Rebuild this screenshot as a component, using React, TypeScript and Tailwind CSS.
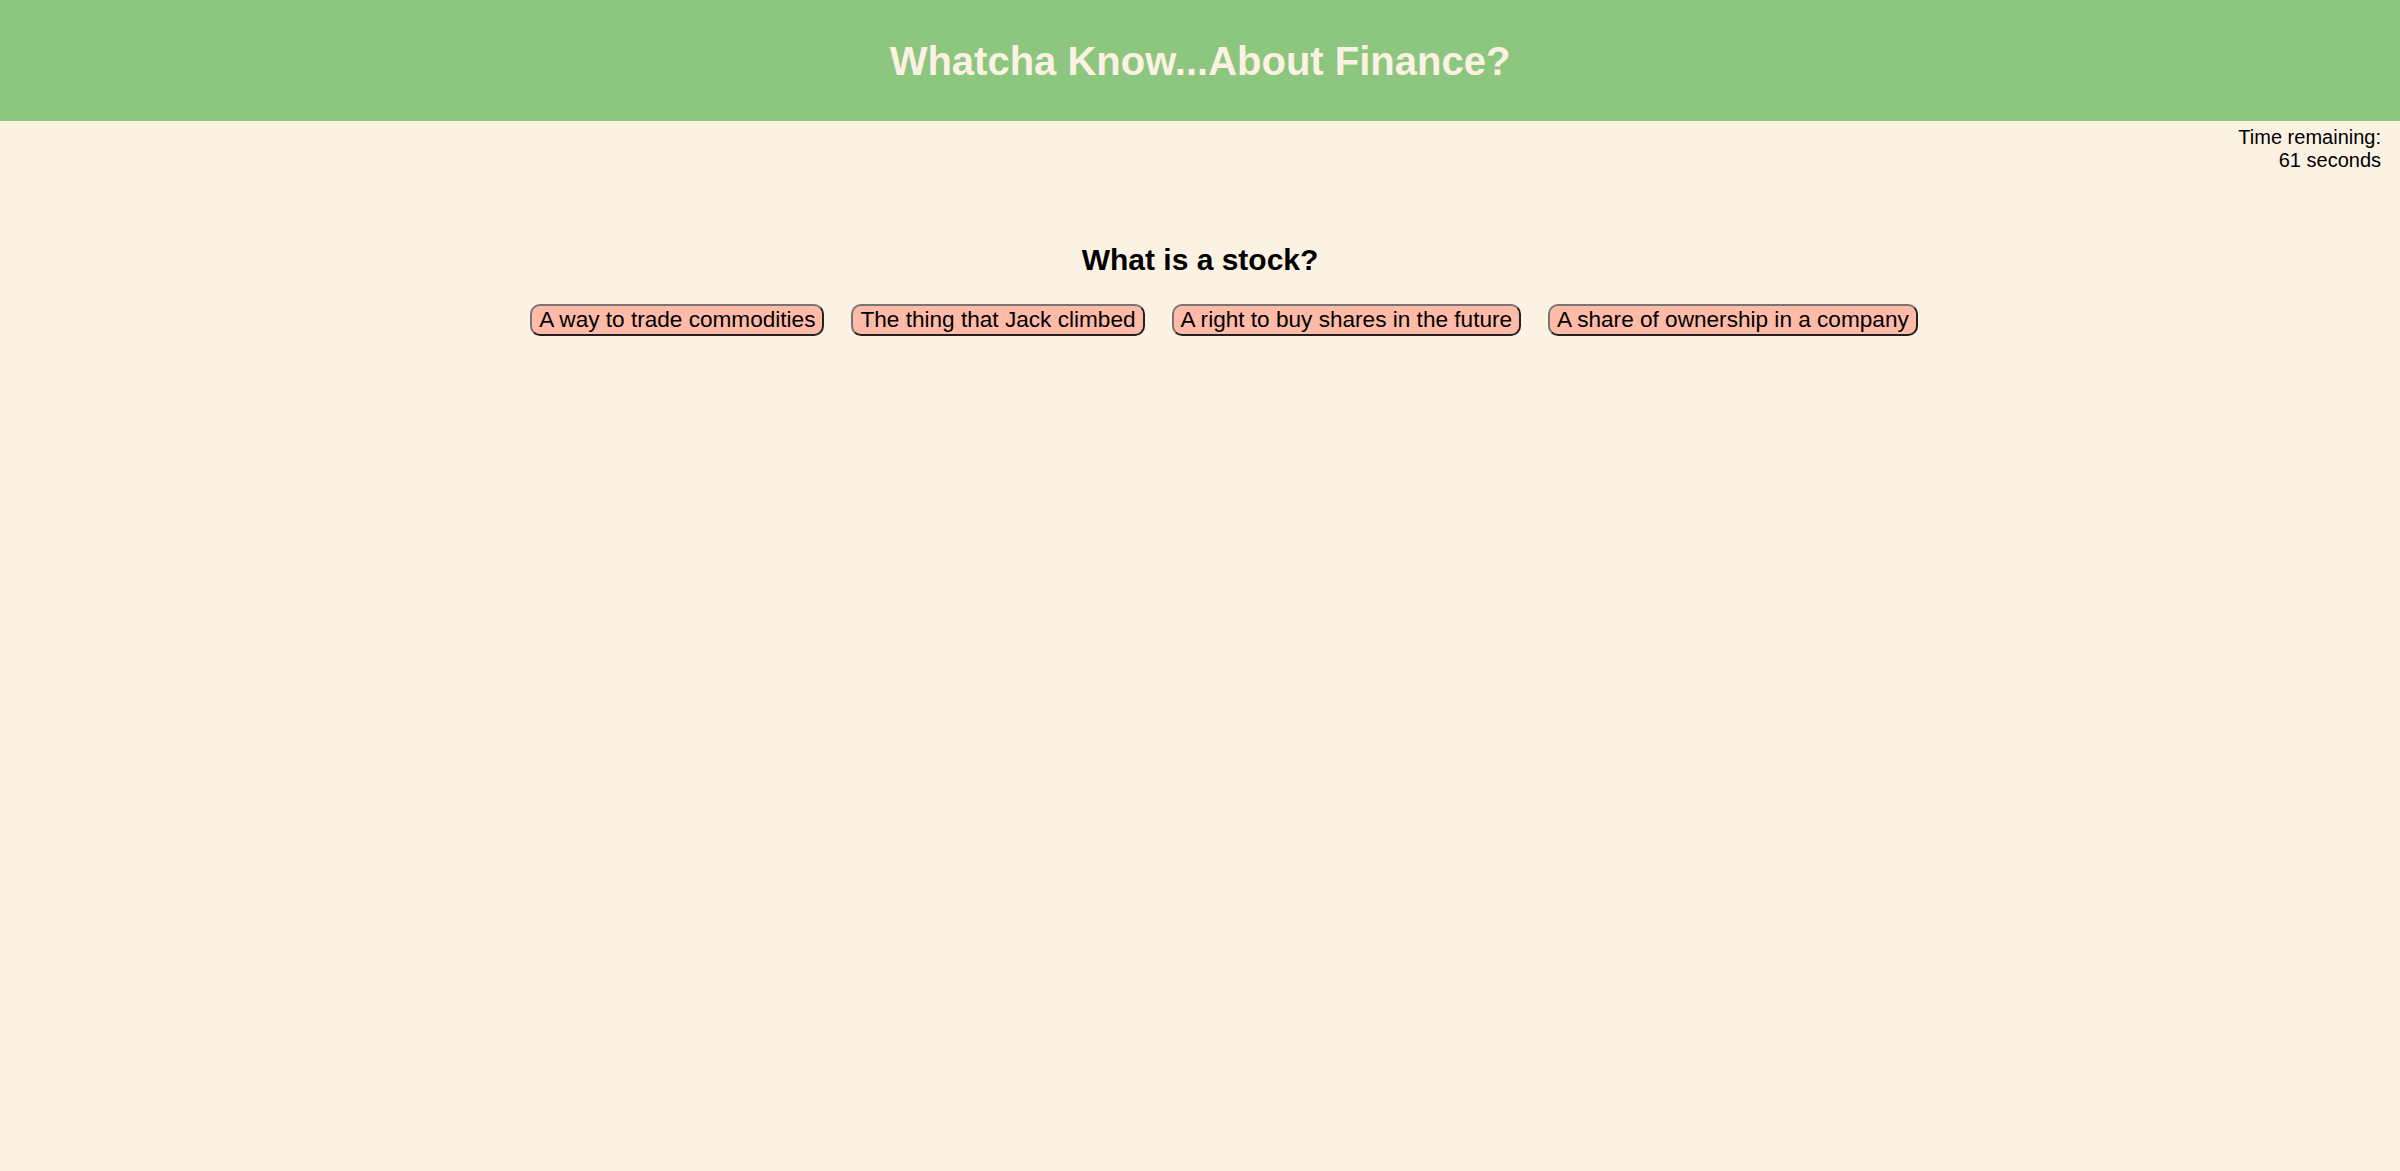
import React from "react";

const answers = [
  "A way to trade commodities",
  "The thing that Jack climbed",
  "A right to buy shares in the future",
  "A share of ownership in a company",
];

export default function App() {
  return (
    <div className="min-h-[1171px] bg-[#fcf2e3] font-['Liberation_Sans',Arial,sans-serif] text-black">
      <header className="flex h-[121px] items-center justify-center bg-[#8dc67e]">
        <h1 className="text-[40px] font-bold text-[#fcf2e3]">Whatcha Know...About Finance?</h1>
      </header>
      <div className="flex justify-end pr-[19px] pt-[5px]">
        <div className="text-right text-[20px] leading-[23px]">
          <div>Time remaining:</div>
          <div>61 seconds</div>
        </div>
      </div>
      <main className="flex flex-col items-center pt-[70px]">
        <h2 className="text-[30px] font-bold leading-[36px]">What is a stock?</h2>
        <div className="mt-[26px] flex gap-[27px] pl-[48px]">
          {answers.map((a) => (
            <button
              key={a}
              className="rounded-[10px] border-2 border-[#767676] bg-[#ffbaa8] px-[7px] text-[22.6px] leading-[28px] [border-style:outset]"
            >
              {a}
            </button>
          ))}
        </div>
      </main>
    </div>
  );
}
